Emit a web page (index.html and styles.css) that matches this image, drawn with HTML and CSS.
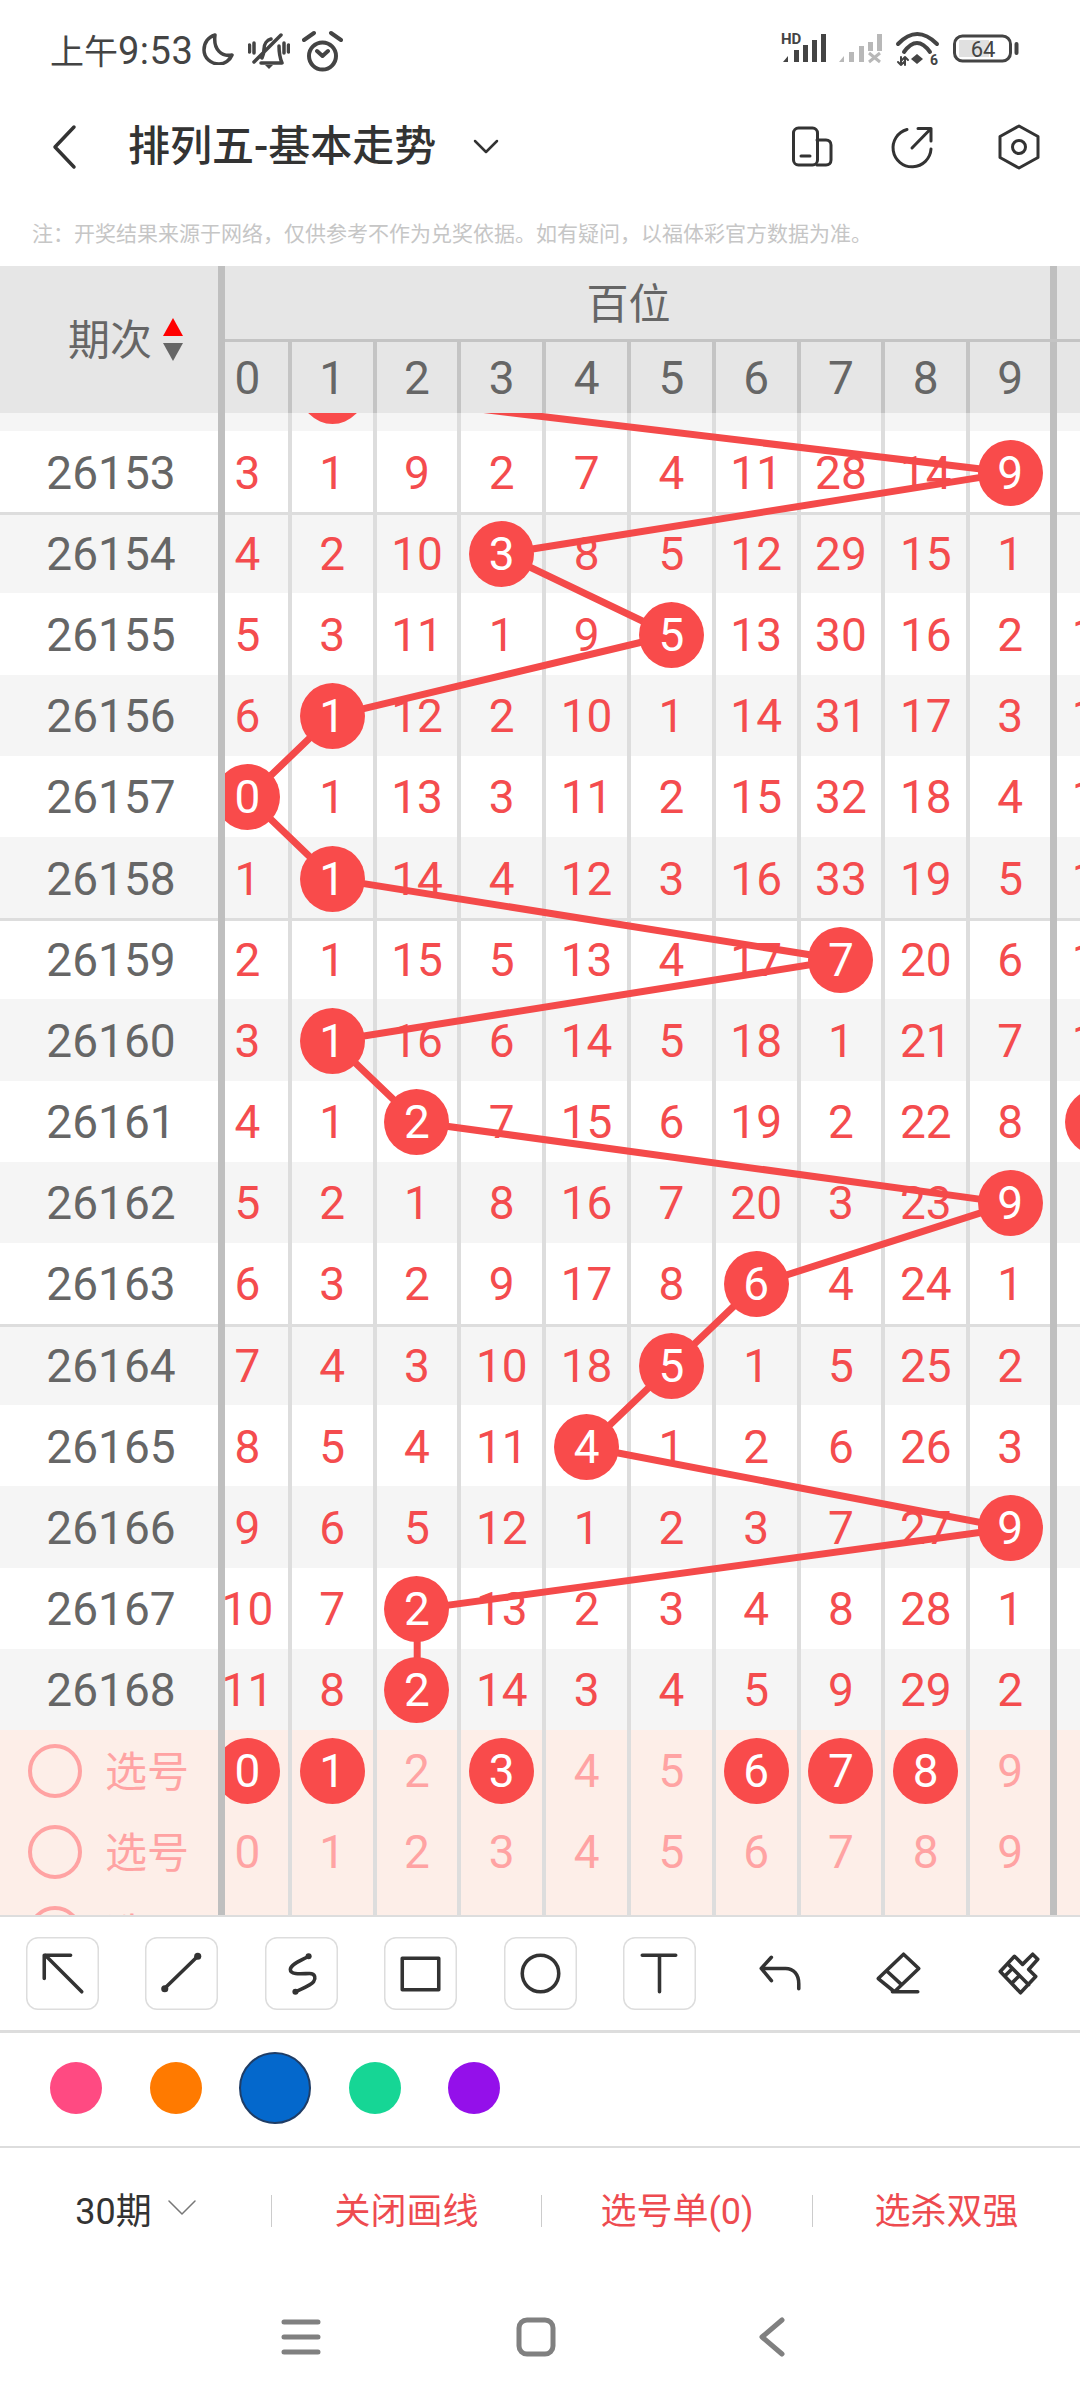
FILE: index.html
```html
<!DOCTYPE html>
<html lang="zh-CN">
<head>
    <meta charset="UTF-8">
    <meta name="viewport" content="width=device-width, initial-scale=1.0">
    <title>排列五-基本走势</title>
    <link rel="stylesheet" href="styles.css">
</head>
<body>
<div class="status">
    <div class="status-left">
        <span class="time">上午<em>9:53</em></span>
        <svg class="ic-moon" viewBox="0 0 32 32"><path d="M13 2C6 4 2 10 2 17c0 8 7 14 15 14 6 0 11-4 13-9C20 24 11 17 13 2z"/></svg>
        <svg class="ic-bell" viewBox="0 0 42 36"><path d="M6 29L33 2M14 25c1-2 2-5 2-9 0-5 3-9 7-10M31 13c0 6 1 12 3 17H13"/><path class="bars" d="M1.500 12v7M6 10v10M36 10v10M40.500 12v7"/><path class="solid" d="M17 32h8l-4 4z"/></svg>
        <svg class="ic-alarm" viewBox="0 0 42 42"><circle cx="20.500" cy="26" r="13.500"/><path d="M2 10L12 3M29 3l10 7M15 21l5.500 5 5.500-5"/></svg>
    </div>
    <div class="status-right">
        <svg class="ic-signal" viewBox="0 0 46 32">
            <text x="0" y="11" class="hd">HD</text>
            <path class="solid" d="M2 29l5-6v6zM13 17h5v12h-5zM22 12h5v17h-5zM31 7h5v22h-5zM40 1h5v28h-5z"/>
        </svg>
        <svg class="ic-signal2" viewBox="0 0 44 32">
            <path class="solid" d="M0 29l5-6v6zM10 19h5v10h-5zM20 13h5v16h-5zM29 9h5v9h-5zM38 1h5v17h-5z"/>
            <path d="M30 20l11 9M41 20l-11 9"/>
        </svg>
        <svg class="ic-wifi" viewBox="0 0 46 36">
            <path d="M3 13Q22-7 42 13M9 21Q22 3 35 21"/>
            <path class="solid" d="M16 28l6-5 6 5-6 5z"/>
            <path class="thin" d="M6 26v8M3 31l3 3 3-3M10 34v-8M7 29l3-3 3 3"/>
            <text x="35" y="34" class="six">6</text>
        </svg>
        <svg class="ic-battery" viewBox="0 0 67 30">
            <rect class="fill" x="7" y="6" width="30" height="17"/>
            <rect x="2.500" y="2" width="56" height="25" rx="8"/>
            <path class="nub" d="M64.500 10v9"/>
            <text x="31" y="22.500" class="level">64</text>
        </svg>
    </div>
</div>

<div class="nav">
    <svg class="nav-back" viewBox="0 0 28 46"><path d="M24 3L5 23l19 20"/></svg>
    <h1 class="nav-title">排列五-基本走势</h1>
    <svg class="nav-caret" viewBox="0 0 26 16"><path d="M2 2l11 11L24 2"/></svg>
    <div class="nav-actions">
        <svg viewBox="0 0 44 44"><rect x="3.500" y="3" width="24" height="37" rx="5"/><path d="M27 15h9c3 0 5 2 5 5v15c0 3-2 5-5 5h-9M11 31h9"/></svg>
        <svg viewBox="0 0 44 44"><path d="M17 4.500A19 19 0 1 0 41 24M22 23L41 3.500M28 3.500h13V16"/></svg>
        <svg viewBox="0 0 44 48"><path d="M22 3l19 10.500v21L22 45 3 34.500v-21z"/><circle cx="22" cy="24" r="6.500"/></svg>
    </div>
</div>

<p class="note">注：开奖结果来源于网络，仅供参考不作为兑奖依据。如有疑问，以福体彩官方数据为准。</p>

<div class="chart">
    <div class="side">
        <div class="side-head">
            <span>期次</span>
            <div class="sort"><i class="sort-up"></i><i class="sort-down"></i></div>
        </div>
        <div class="body">
            <div class="rows">
                <div class="row"></div>
                <div class="row">26153</div>
                <div class="row sep">26154</div>
                <div class="row">26155</div>
                <div class="row">26156</div>
                <div class="row">26157</div>
                <div class="row">26158</div>
                <div class="row sep">26159</div>
                <div class="row">26160</div>
                <div class="row">26161</div>
                <div class="row">26162</div>
                <div class="row">26163</div>
                <div class="row sep">26164</div>
                <div class="row">26165</div>
                <div class="row">26166</div>
                <div class="row">26167</div>
                <div class="row">26168</div>
                <div class="row pick"><i class="radio"></i><span>选号</span></div>
                <div class="row pick"><i class="radio"></i><span>选号</span></div>
                <div class="row pick"><i class="radio"></i><span>选号</span></div>
            </div>
        </div>
    </div>

    <div class="main">
        <div class="main-head">
            <div class="groups"><div class="group">百位</div></div>
            <div class="cells digits">
                <span>0</span><span>1</span><span>2</span><span>3</span><span>4</span><span>5</span><span>6</span><span>7</span><span>8</span><span>9</span><span></span>
            </div>
        </div>
        <div class="body">
            <div class="rows">
                <div class="row cells"><span></span><span><b></b></span><span></span><span></span><span></span><span></span><span></span><span></span><span></span><span></span><span></span></div>
                <div class="row cells"><span>3</span><span>1</span><span>9</span><span>2</span><span>7</span><span>4</span><span>11</span><span>28</span><span>14</span><span><b>9</b></span><span></span></div>
                <div class="row cells sep"><span>4</span><span>2</span><span>10</span><span><b>3</b></span><span>8</span><span>5</span><span>12</span><span>29</span><span>15</span><span>1</span><span></span></div>
                <div class="row cells"><span>5</span><span>3</span><span>11</span><span>1</span><span>9</span><span><b>5</b></span><span>13</span><span>30</span><span>16</span><span>2</span><span>10</span></div>
                <div class="row cells"><span>6</span><span><b>1</b></span><span>12</span><span>2</span><span>10</span><span>1</span><span>14</span><span>31</span><span>17</span><span>3</span><span>11</span></div>
                <div class="row cells"><span><b>0</b></span><span>1</span><span>13</span><span>3</span><span>11</span><span>2</span><span>15</span><span>32</span><span>18</span><span>4</span><span>12</span></div>
                <div class="row cells"><span>1</span><span><b>1</b></span><span>14</span><span>4</span><span>12</span><span>3</span><span>16</span><span>33</span><span>19</span><span>5</span><span>13</span></div>
                <div class="row cells sep"><span>2</span><span>1</span><span>15</span><span>5</span><span>13</span><span>4</span><span>17</span><span><b>7</b></span><span>20</span><span>6</span><span>14</span></div>
                <div class="row cells"><span>3</span><span><b>1</b></span><span>16</span><span>6</span><span>14</span><span>5</span><span>18</span><span>1</span><span>21</span><span>7</span><span>15</span></div>
                <div class="row cells"><span>4</span><span>1</span><span><b>2</b></span><span>7</span><span>15</span><span>6</span><span>19</span><span>2</span><span>22</span><span>8</span><span><b></b></span></div>
                <div class="row cells"><span>5</span><span>2</span><span>1</span><span>8</span><span>16</span><span>7</span><span>20</span><span>3</span><span>23</span><span><b>9</b></span><span></span></div>
                <div class="row cells"><span>6</span><span>3</span><span>2</span><span>9</span><span>17</span><span>8</span><span><b>6</b></span><span>4</span><span>24</span><span>1</span><span></span></div>
                <div class="row cells sep"><span>7</span><span>4</span><span>3</span><span>10</span><span>18</span><span><b>5</b></span><span>1</span><span>5</span><span>25</span><span>2</span><span></span></div>
                <div class="row cells"><span>8</span><span>5</span><span>4</span><span>11</span><span><b>4</b></span><span>1</span><span>2</span><span>6</span><span>26</span><span>3</span><span></span></div>
                <div class="row cells"><span>9</span><span>6</span><span>5</span><span>12</span><span>1</span><span>2</span><span>3</span><span>7</span><span>27</span><span><b>9</b></span><span></span></div>
                <div class="row cells"><span>10</span><span>7</span><span><b>2</b></span><span>13</span><span>2</span><span>3</span><span>4</span><span>8</span><span>28</span><span>1</span><span></span></div>
                <div class="row cells"><span>11</span><span>8</span><span><b>2</b></span><span>14</span><span>3</span><span>4</span><span>5</span><span>9</span><span>29</span><span>2</span><span></span></div>
                <div class="row cells pick"><span><b>0</b></span><span><b>1</b></span><span>2</span><span><b>3</b></span><span>4</span><span>5</span><span><b>6</b></span><span><b>7</b></span><span><b>8</b></span><span>9</span><span></span></div>
                <div class="row cells pick"><span>0</span><span>1</span><span>2</span><span>3</span><span>4</span><span>5</span><span>6</span><span>7</span><span>8</span><span>9</span><span></span></div>
                <div class="row cells pick"><span></span><span></span><span></span><span></span><span></span><span></span><span></span><span></span><span></span><span></span><span></span></div>
            </div>
            <!-- trend line, drawn in page coordinates -->
            <svg class="trend" viewBox="225 412 855 1502">
                <polyline points="332.4,390.4 1010.4,471.6 502,552.8 671.6,634 332.4,715.2 248,796.4 332.4,877.6 841.2,958.8 332.4,1040 417.2,1121.2 1010.4,1202.4 756.4,1283.6 671.6,1364.8 586.8,1446 1010.4,1527.2 417.2,1608.4 417.2,1689.6"/>
            </svg>
        </div>
    </div>
</div>

<div class="tools">
    <div class="tool boxed"><svg viewBox="0 0 72 72"><path d="M55 54L19 18M44 18H18v23"/></svg></div>
    <div class="tool boxed"><svg viewBox="0 0 72 72"><path d="M52 19L19 51"/><circle class="solid" cx="52" cy="19" r="3.500"/><circle class="solid" cx="19.500" cy="51" r="3.500"/></svg></div>
    <div class="tool boxed"><svg viewBox="0 0 72 72"><path d="M43 19C36 23 25 27 25 32c0 6 13 4 19 4 6 0 6 5 4 8-3 4-12 7-18 10"/><circle class="solid" cx="43" cy="19" r="3"/><circle class="solid" cx="30" cy="54" r="3"/></svg></div>
    <div class="tool boxed"><svg viewBox="0 0 72 72"><rect x="18" y="21" width="36" height="31"/></svg></div>
    <div class="tool boxed"><svg viewBox="0 0 72 72"><circle cx="36" cy="36" r="18"/></svg></div>
    <div class="tool boxed"><svg viewBox="0 0 72 72"><path d="M19 18h33M36 18v36"/></svg></div>
    <div class="tool"><svg viewBox="0 0 72 72"><path d="M28 20L18 31l10 12M18 31h24c8 0 13 6 13 15v5"/></svg></div>
    <div class="tool"><svg viewBox="0 0 72 72"><path d="M41 17l15 14-24 23-16-13zM25 34l14 13M30 54h25"/></svg></div>
    <div class="tool"><svg viewBox="0 0 72 72"><path d="M32 19l8 8 10-10 5 5-9 10 7 7-15 16-20-21zM26 27l20 20M23 38l6-6M30 45l6-6"/></svg></div>
</div>

<div class="colors">
    <i class="dot pink"></i>
    <i class="dot orange"></i>
    <i class="dot blue dot-on"></i>
    <i class="dot green"></i>
    <i class="dot purple"></i>
</div>

<div class="actions">
    <div class="action action-issue">30期<svg viewBox="0 0 28 16"><path d="M1 1l13 13L27 1"/></svg></div>
    <div class="action">关闭画线</div>
    <div class="action">选号单(0)</div>
    <div class="action">选杀双强</div>
</div>

<div class="gesture">
    <svg viewBox="0 0 40 40"><path d="M3 5h34M3 20h34M3 35h34"/></svg>
    <svg viewBox="0 0 40 40"><rect x="3" y="3" width="34" height="34" rx="8"/></svg>
    <svg viewBox="0 0 40 40"><path d="M31 3L11 20l20 17"/></svg>
</div>
</body>
</html>
```
FILE: styles.css
```css
* {
    box-sizing: border-box;
}
body {
    width: 1080px;
    height: 2400px;
    margin: 0;
    overflow: hidden;
    background-color: #fff;
    font-family: Roboto, "Noto Sans CJK SC", sans-serif;
    color: #333;
}
svg {
    display: block;
    flex: none;
    fill: none;
    stroke: #333;
    stroke-width: 3;
    stroke-linecap: round;
    stroke-linejoin: round;
}
svg .solid {
    fill: currentColor;
    stroke: none;
}

/* status bar */
.status {
    height: 98px;
    display: flex;
    justify-content: space-between;
    align-items: center;
    padding: 0 61px 0 50px;
    color: #444;
}
.status svg {
    stroke: #444;
}
.status-left,
.status-right {
    display: flex;
    align-items: center;
}
.time {
    width: 152px;
    font-size: 34px;
    white-space: nowrap;
}
.time em {
    font-style: normal;
    font-size: 38px;
    letter-spacing: 0.5px;
}
.ic-moon {
    width: 32px;
    height: 32px;
    stroke-width: 3.5;
}
.ic-bell {
    width: 42px;
    height: 36px;
    margin: 4px 0 0 14px;
    stroke-width: 3.5;
}
.ic-alarm {
    width: 42px;
    height: 42px;
    margin: 4px 0 0 12px;
    stroke-width: 4;
}
.ic-signal {
    width: 46px;
    height: 32px;
    stroke: none;
}
.hd {
    font-family: Roboto, sans-serif;
    font-size: 15px;
    font-weight: 700;
    fill: #444;
    stroke: none;
}
.ic-signal2 {
    width: 44px;
    height: 32px;
    margin-left: 12px;
    color: #b8b8b8;
}
.status .ic-signal2 path {
    stroke: #b8b8b8;
    stroke-linecap: butt;
}
.status .ic-signal2 path.solid {
    stroke: none;
}
.ic-wifi {
    width: 46px;
    height: 36px;
    margin-left: 12px;
    stroke-width: 4;
}
.ic-wifi .thin {
    stroke-width: 2;
}
.six {
    font-family: Roboto, sans-serif;
    font-size: 14px;
    font-weight: 700;
    fill: #444;
    stroke: none;
}
.ic-battery {
    width: 67px;
    height: 30px;
    margin-left: 11px;
}
.ic-battery .fill {
    fill: #e0e0e0;
    stroke: none;
}
.ic-battery .nub {
    stroke-width: 4;
}
.level {
    font-family: Roboto, sans-serif;
    font-size: 22px;
    fill: #444;
    stroke: none;
    text-anchor: middle;
}

/* title bar */
.nav {
    height: 98px;
    display: flex;
    align-items: center;
    padding: 0 39px 0 50px;
}
.nav-back {
    width: 28px;
    height: 46px;
    stroke-width: 3.5;
}
.nav-title {
    margin: 0 0 0 50px;
    width: 345px;
    font-size: 42px;
    font-weight: 500;
    line-height: 1;
}
.nav-caret {
    width: 26px;
    height: 16px;
    stroke-width: 2.5;
}
.nav-actions {
    margin-left: auto;
    display: flex;
    align-items: center;
    gap: 56px;
}
.nav-actions svg {
    width: 44px;
    height: 44px;
}
.nav-actions svg:last-child {
    height: 48px;
    margin-left: 7px;
}

.note {
    height: 70px;
    margin: 0;
    padding: 26px 0 0 32px;
    font-size: 21px;
    line-height: 24px;
    color: #c6c6c6;
    white-space: nowrap;
}

/* chart */
.chart {
    height: 1651px;
    display: flex;
    border-bottom: 2px solid #ddd;
    font-size: 46px;
}
.side {
    width: 225px;
    flex: none;
    display: flex;
    flex-direction: column;
    border-right: 7px solid #bfbfbf;
    color: #666;
}
.side-head {
    height: 147px;
    flex: none;
    display: flex;
    align-items: center;
    gap: 11px;
    padding-left: 68px;
    background-color: #e6e6e6;
    font-size: 42px;
}
.side-head span {
    margin-bottom: 6px;
}
.sort {
    display: flex;
    flex-direction: column;
    gap: 7px;
}
.sort-up,
.sort-down {
    display: block;
    border-left: 10.5px solid transparent;
    border-right: 10.5px solid transparent;
}
.sort-up {
    border-bottom: 18px solid #f00;
}
.sort-down {
    border-top: 18px solid #666;
}
.main {
    flex: 1;
    min-width: 0;
    display: flex;
    flex-direction: column;
    overflow: hidden;
}
.main-head {
    height: 147px;
    flex: none;
    background-color: #e6e6e6;
    color: #666;
}
.groups {
    height: 76px;
    margin-left: -18px;
    border-bottom: 3px solid #c4c4c4;
}
.group {
    width: 850px;
    height: 73px;
    display: flex;
    justify-content: center;
    align-items: center;
    padding-bottom: 5px;
    border-right: 7px solid #bfbfbf;
    font-size: 42px;
}
.body {
    position: relative;
    flex: 1;
    min-height: 0;
    overflow: hidden;
}
.rows {
    margin-top: -63.2px;
}
.row {
    height: 81.2px;
    background-color: #fff;
}
.rows .row:nth-child(odd) {
    background-color: #f5f5f5;
}
.rows .row.sep {
    box-shadow: inset 0 3px 0 #ddd;
}
.side .row {
    display: flex;
    justify-content: center;
    align-items: center;
    padding: 2px 0 0 4px;
}
.cells {
    display: grid;
    grid-template-columns: repeat(9, 84.8px) 87px 84.8px;
    width: 935px;
    margin-left: -18px;
    color: #f44c4e;
}
.cells span {
    display: flex;
    justify-content: center;
    align-items: center;
    padding-top: 2px;
    border-right: 4px solid #ddd;
    white-space: nowrap;
}
.cells span:nth-child(10) {
    border-right: 7px solid #bfbfbf;
}
.digits {
    height: 71px;
    color: #666;
}
.digits span {
    padding-top: 0;
    border-right-color: #c4c4c4;
}
.cells b {
    position: relative;
    z-index: 2;
    flex: none;
    width: 65px;
    height: 66px;
    display: flex;
    justify-content: center;
    align-items: center;
    border-radius: 50%;
    background-color: #f94b4b;
    color: #fff;
    font-weight: 400;
}
.trend {
    position: absolute;
    left: 0;
    top: 0;
    z-index: 1;
    width: 855px;
    height: 1502px;
}
.trend polyline {
    stroke: #f44a4a;
    stroke-width: 7;
}
.rows .row.pick {
    background-color: #fdeee8;
    color: #ffa3a3;
}
.pick.cells span {
    padding-top: 0;
}
.side .row.pick {
    justify-content: flex-start;
    padding: 0 0 0 28px;
    font-size: 42px;
}
.pick span {
    margin-bottom: 5px;
}
.pick.cells span {
    margin-bottom: 0;
}
.radio {
    width: 54px;
    height: 54px;
    margin-right: 23px;
    border: 4px solid #ffa3a3;
    border-radius: 50%;
}

/* drawing tools */
.tools {
    height: 116px;
    display: grid;
    grid-template-columns: repeat(9, 119.5px);
    justify-content: center;
    justify-items: center;
    align-items: center;
    padding-bottom: 1px;
    border-bottom: 3px solid #ddd;
}
.tool {
    width: 73px;
    height: 73px;
    border-radius: 12px;
}
.tool.boxed {
    box-shadow: inset 0 0 0 1.5px #ddd;
}
.tool svg {
    width: 73px;
    height: 73px;
    stroke-width: 3.5;
}
.colors {
    height: 115px;
    display: flex;
    align-items: center;
    gap: 47.5px;
    padding: 0 0 3px 50px;
    border-bottom: 2px solid #ddd;
}
.dot {
    width: 52px;
    height: 52px;
    border-radius: 50%;
}
.dot-on {
    width: 72px;
    height: 72px;
    margin: 0 -10px;
    border: 2px solid #1f3d66;
}
.pink { background-color: #ff4a82; }
.orange { background-color: #ff7a00; }
.blue { background-color: #0468cc; }
.green { background-color: #16d695; }
.purple { background-color: #9410ea; }

/* bottom actions */
.actions {
    height: 126px;
    display: grid;
    grid-template-columns: 271px 270px 271px 268px;
    align-items: center;
    font-size: 36px;
    color: #ee4b50;
}
.action {
    height: 32px;
    display: flex;
    justify-content: center;
    align-items: center;
    gap: 16px;
    padding-bottom: 6px;
    border-left: 1px solid #ccc;
    white-space: nowrap;
}
.action-issue {
    border-left: none;
    color: #333;
}
.action-issue svg {
    width: 28px;
    height: 16px;
    stroke: #777;
    stroke-width: 1.5;
}

/* system gesture bar */
.gesture {
    height: 126px;
    display: flex;
    align-items: center;
    gap: 195px;
    padding-left: 281px;
}
.gesture svg {
    width: 40px;
    height: 40px;
    stroke: #808080;
    stroke-width: 5;
}
```
